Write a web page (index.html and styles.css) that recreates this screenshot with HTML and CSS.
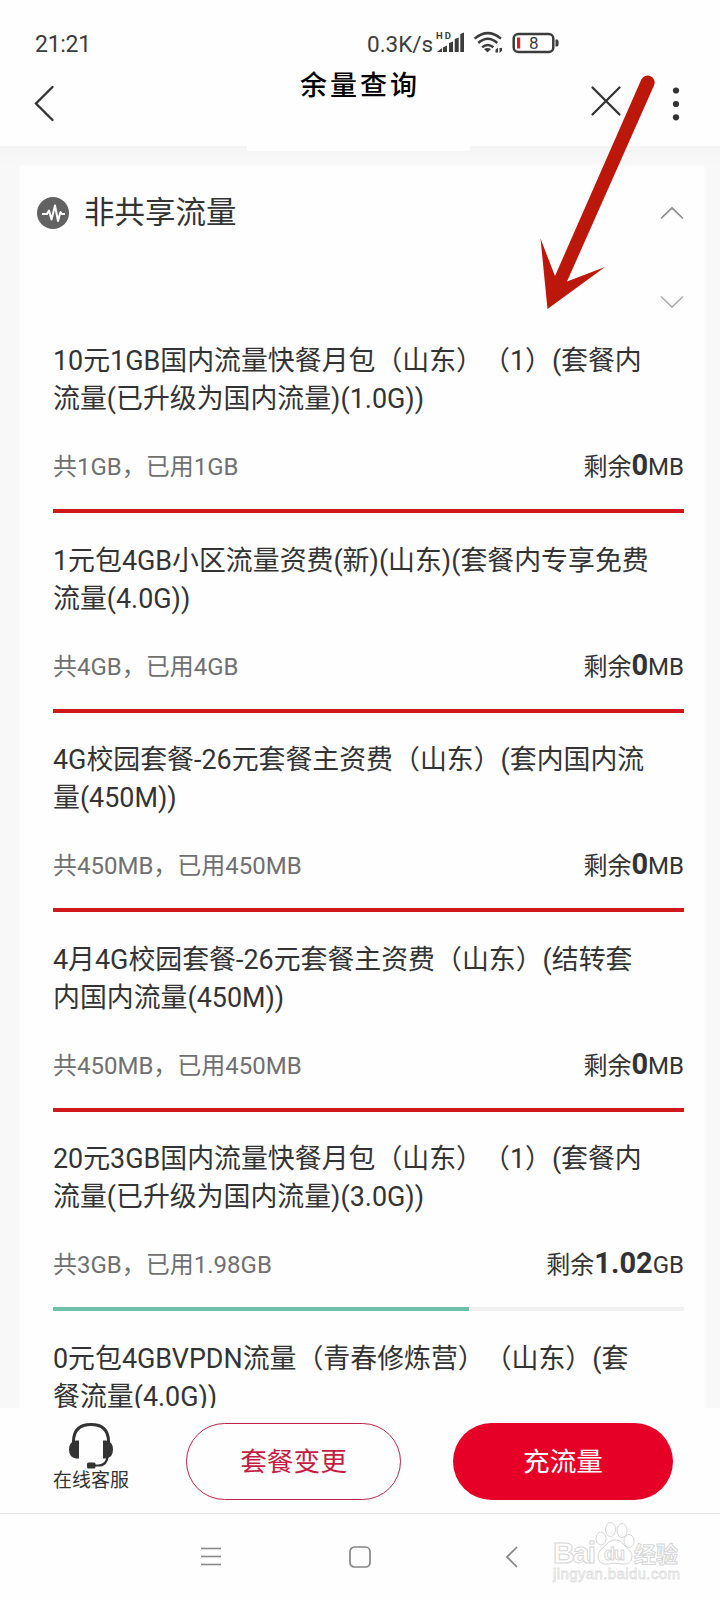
FILE: index.html
```html
<!DOCTYPE html>
<html lang="zh-CN">
<head>
<meta charset="utf-8">
<title>余量查询</title>
<link rel="stylesheet" href="styles.css">
</head>
<body>
<div class="screen">
  <header class="header">
    <div class="status">
      <span class="clock">21:21</span>
      <span class="speed">0.3K/s</span>
      <svg class="signals" width="126" height="26" viewBox="0 0 126 26">
        <text class="hd" x="0" y="9" textLength="15">HD</text>
        <g fill="#3c3c3c">
          <path d="M1 22l5-4v4zM7 17.500l4-2v6.500h-4zM13 13l4-1.500v10.500h-4zM18.700 9l4-1.500v14.500h-4zM24.300 4l3.700-1.500v19.500h-3.700z"/>
          <path d="M51.500 22.500l-3.500-3.600q3.500-1.800 7 0z"/>
          <path d="M62 17.500l-2.500 2.200v2.800h2.500zM63.500 23l2.500-2.200v-2.800h-2.500z"/>
        </g>
        <g fill="none" stroke="#3c3c3c" stroke-width="2.500">
          <path d="M38.600 8.600Q51.800-2.300 65 8.600M42.300 13Q51.800 4.600 61.300 13M46.200 17.200Q51.800 12.700 57.400 17.200"/>
          <rect x="77.700" y="4" width="39.600" height="18" rx="4.500"/>
        </g>
        <path d="M119.500 9.500h1.500q1.500 0 1.500 2v3q0 2-1.500 2h-1.500z" fill="#3c3c3c"/>
        <rect x="81" y="7.500" width="3.200" height="11" fill="#d5202c"/>
        <text class="charge" x="93" y="19">8</text>
      </svg>
    </div>
    <div class="bar">
      <svg class="back" width="22" height="38" viewBox="0 0 22 38"><path d="M19.500 3L3 19.500 19.500 36" fill="none" stroke="#333" stroke-width="2.300" stroke-linecap="round"/></svg>
      <h1 class="title">余量查询</h1>
      <svg class="close" width="32" height="32" viewBox="0 0 32 32"><path d="M2.500 2.500l27 27M29.500 2.500l-27 27" stroke="#333" stroke-width="2.300" stroke-linecap="round"/></svg>
      <svg class="more" width="8" height="36" viewBox="0 0 8 36" fill="#333"><circle cx="4" cy="4.500" r="3.100"/><circle cx="4" cy="18" r="3.100"/><circle cx="4" cy="31.300" r="3.100"/></svg>
    </div>
    <div class="tab"></div>
  </header>

  <main class="content">
    <section class="card">
      <div class="group">
        <svg class="pulse" width="32" height="32" viewBox="0 0 32 32"><circle cx="16" cy="16" r="16" fill="#626262"/><path d="M5 17h5l2-3.500 2.500 9 3.500-14 3 15.500 2.500-9 1.500 2h3" fill="none" stroke="#fff" stroke-width="2" stroke-linejoin="round"/></svg>
        <h2 class="group-name">非共享流量</h2>
        <svg class="chevron" width="24" height="14" viewBox="0 0 24 14"><path d="M1 12.500l11-10.500 11 10.500" fill="none" stroke="#8a8a8a" stroke-width="1.700"/></svg>
      </div>
      <div class="fold"><svg class="chevron" width="24" height="14" viewBox="0 0 24 14"><path d="M1 1.500l11 10.500 11-10.500" fill="none" stroke="#adadad" stroke-width="1.700"/></svg></div>
      <div class="plans">
        <article class="plan">
          <h3 class="plan-name">10元1GB国内流量快餐月包（山东）（1）(套餐内<br>流量(已升级为国内流量)(1.0G))</h3>
          <div class="usage"><span class="used">共1GB，已用1GB</span><span class="left">剩余<b>0</b>MB</span></div>
          <div class="meter"><div class="fill spent" style="width:100%"></div></div>
        </article>
        <article class="plan">
          <h3 class="plan-name">1元包4GB小区流量资费(新)(山东)(套餐内专享免费<br>流量(4.0G))</h3>
          <div class="usage"><span class="used">共4GB，已用4GB</span><span class="left">剩余<b>0</b>MB</span></div>
          <div class="meter"><div class="fill spent" style="width:100%"></div></div>
        </article>
        <article class="plan">
          <h3 class="plan-name">4G校园套餐-26元套餐主资费（山东）(套内国内流<br>量(450M))</h3>
          <div class="usage"><span class="used">共450MB，已用450MB</span><span class="left">剩余<b>0</b>MB</span></div>
          <div class="meter"><div class="fill spent" style="width:100%"></div></div>
        </article>
        <article class="plan">
          <h3 class="plan-name">4月4G校园套餐-26元套餐主资费（山东）(结转套<br>内国内流量(450M))</h3>
          <div class="usage"><span class="used">共450MB，已用450MB</span><span class="left">剩余<b>0</b>MB</span></div>
          <div class="meter"><div class="fill spent" style="width:100%"></div></div>
        </article>
        <article class="plan">
          <h3 class="plan-name">20元3GB国内流量快餐月包（山东）（1）(套餐内<br>流量(已升级为国内流量)(3.0G))</h3>
          <div class="usage"><span class="used">共3GB，已用1.98GB</span><span class="left">剩余<b>1.02</b>GB</span></div>
          <div class="meter"><div class="fill" style="width:66%"></div></div>
        </article>
        <article class="plan">
          <h3 class="plan-name">0元包4GBVPDN流量（青春修炼营）（山东）(套<br>餐流量(4.0G))</h3>
        </article>
      </div>
    </section>
  </main>

  <footer class="actions">
    <div class="service">
      <svg width="46" height="46" viewBox="0 0 46 46"><path d="M5.500 19v-1Q6 1.500 23 1.500T40.500 18v1" fill="none" stroke="#333" stroke-width="3"/><path d="M11 17.500v18H8q-7-1-7-9t7-9zM35 17.500v18h3q7-1 7-9t-7-9z" fill="#333"/><path d="M39.500 34q-1 8.500-9 8.500h-5" fill="none" stroke="#333" stroke-width="2.200"/><rect x="19" y="39.500" width="8.500" height="6" rx="1.500" fill="#333"/></svg>
      <span class="service-name">在线客服</span>
    </div>
    <button class="btn change">套餐变更</button>
    <button class="btn recharge">充流量</button>
  </footer>

  <nav class="nav">
    <svg class="menu" width="20" height="22" viewBox="0 0 20 22"><path d="M0 2.500h20M0 10.500h20M0 18.500h20" stroke="#858585" stroke-width="1.500"/></svg>
    <svg class="home" width="22" height="22" viewBox="0 0 22 22"><rect x="1" y="1" width="20" height="20" rx="4.500" fill="none" stroke="#858585" stroke-width="1.700"/></svg>
    <svg class="prev" width="14" height="22" viewBox="0 0 14 22"><path d="M12 1L2 11l10 10" fill="none" stroke="#858585" stroke-width="1.700"/></svg>
  </nav>

  <svg class="brand" width="136" height="66" viewBox="0 0 136 66">
    <g fill="#fff" stroke="#d6d6d6" stroke-width="1">
      <text class="brand-name" x="3" y="41" textLength="43">Bai</text>
      <ellipse cx="51" cy="16.500" rx="5" ry="6.500"/><ellipse cx="60.500" cy="7.500" rx="5" ry="7"/><ellipse cx="72" cy="8.500" rx="5" ry="7"/><ellipse cx="79" cy="19" rx="5" ry="6.500"/>
      <path d="M64 18q6-1 11 6 7 5 7 10 0 9-10 8-7-2-14 0-10 1-10-8 0-5 7-10 3-5 9-6z"/>
      <text class="brand-du" x="54" y="38" textLength="21">du</text>
      <text class="brand-cn" x="84" y="40" textLength="44">经验</text>
    </g>
    <text class="brand-url" x="3" y="57" textLength="127">jingyan.baidu.com</text>
  </svg>

  <svg class="arrow" width="120" height="240" viewBox="0 0 120 240"><path d="M101.300 4.500A7 7 0 0 1 114 10.500L27 206.500 65 192 7.500 234 0.500 163.500 15 201z" fill="#bb180b"/></svg>
</div>
</body>
</html>
```
FILE: styles.css
```css
* { box-sizing: border-box; margin: 0; padding: 0; }
svg { display: block; flex: none; }
h1, h2, h3 { font-weight: 400; }

.screen {
  position: relative;
  width: 720px;
  height: 1600px;
  overflow: hidden;
  display: flex;
  flex-direction: column;
  background: #fefefe;
  color: #333;
  font-family: Roboto, "Noto Sans CJK SC", sans-serif;
  white-space: nowrap;
  text-spacing-trim: space-all;
}

.header { height: 146px; flex: none; background: #fefefe; }
.status { display: flex; height: 64px; padding: 30px 0 0 35px; color: #3c3c3c; }
.clock { width: 332px; font-size: 23px; line-height: 29px; letter-spacing: -0.3px; }
.speed { width: 69px; font-size: 22.500px; line-height: 29px; }
.hd { font: 700 9.500px Roboto, sans-serif; fill: #3c3c3c; }
.charge { font: 17px Roboto, sans-serif; fill: #3c3c3c; }
.bar { display: flex; height: 82px; align-items: flex-start; }
.back { margin: 20px 0 0 33px; }
.title { margin: 2px 0 0 245px; width: 290px; color: #000; font-size: 27px; line-height: 40px; letter-spacing: 3px; font-weight: 500; }
.close { margin-top: 21px; }
.more { margin: 22px 0 0 50px; }
.tab { position: relative; width: 223px; height: 5px; margin-left: 247px; background: #fefefe; }

.content {
  height: 1262px;
  flex: none;
  overflow: hidden;
  padding: 20px 16px 0 20px;
  background: linear-gradient(#f5f5f5, #f8f8f8 20px, #f8f8f8);
}
.card { height: 1260px; padding: 0 20px 0 17px; background: #fefefe; box-shadow: 0 0 6px #fefefe; }
.group { display: flex; height: 96px; padding-top: 25px; }
.pulse { margin-top: 6px; }
.group-name { margin-left: 15px; font-size: 30.500px; line-height: 44px; flex: 1; }
.group .chevron { margin-top: 15px; }
.fold { display: flex; justify-content: flex-end; height: 80px; padding-top: 33px; }
.plans { padding-left: 16px; width: 647px; }
.plan { height: 199.500px; }
.plan-name { font-size: 26.900px; line-height: 38px; }
.usage { display: flex; justify-content: space-between; align-items: baseline; height: 36px; margin-top: 31px; line-height: 36px; font-size: 24px; }
.used { color: #707070; }
.left b { font-size: 29px; font-weight: 700; line-height: 30px; }
.meter { height: 4px; margin-top: 24px; background: #f0f0f0; }
.fill { height: 4px; background: #6ac1a8; }
.spent { background: #d0171c; }

.actions { display: flex; height: 106px; flex: none; background: #fefefe; border-bottom: 1px solid #e5e5e5; }
.service { display: flex; flex-direction: column; align-items: center; width: 76px; margin: 15px 0 0 53px; }
.service-name { font-size: 19px; line-height: 24px; }
.btn { height: 77px; margin-top: 15px; border-radius: 39px; font: 26.700px/72px Roboto, "Noto Sans CJK SC", sans-serif; }
.change { width: 215px; margin-left: 57px; border: 1.500px solid #bd2548; background: #fefefe; color: #c51c43; }
.recharge { width: 220px; margin-left: 52px; border: 0; background: #e60027; color: #fff; }

.nav { display: flex; height: 86px; padding-top: 32px; }
.menu { margin-left: 201px; }
.home { margin-left: 128px; }
.prev { margin-left: 134px; }

/* Brand mark floats over the system navigation. */
.brand { position: absolute; left: 550px; top: 1522px; }
.brand-name { font: 700 30px "Liberation Sans", sans-serif; }
.brand-du { font: 700 18px "Liberation Sans", sans-serif; }
.brand-cn { font: 700 22px "Noto Sans CJK SC", sans-serif; }
.brand-url { font: 15px "Liberation Sans", sans-serif; fill: #fff; stroke: #dedede; stroke-width: 0.8; }

/* Pointer laid over the page. */
.arrow { position: absolute; left: 540px; top: 75px; }
```
